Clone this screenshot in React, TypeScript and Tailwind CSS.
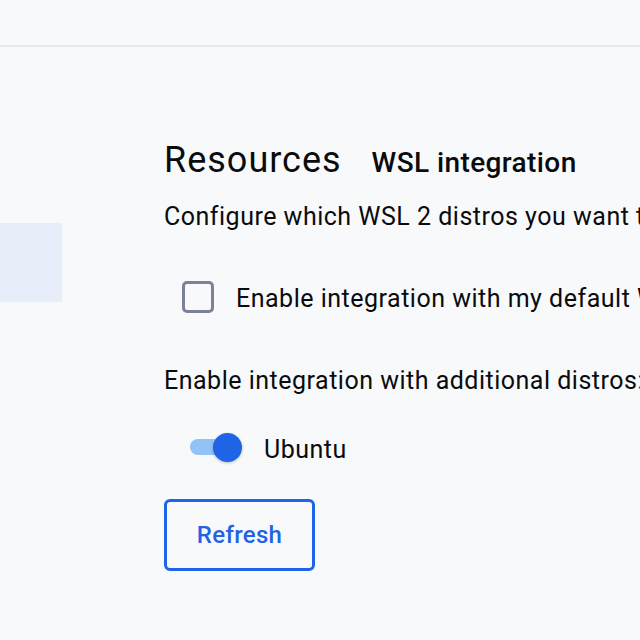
import { useState } from 'react'

export default function App() {
  const [defaultDistro, setDefaultDistro] = useState(false)
  const [ubuntu, setUbuntu] = useState(true)

  return (
    <div
      className="w-[640px] h-[640px] overflow-hidden bg-[#f8f9fb] text-[#0a0b0d]"
      style={{ fontFamily: 'Roboto, "Noto Sans", sans-serif' }}
    >
      <header className="h-[47px] border-b-2 border-[#e8e9ed]" />

      <div className="flex">
        {/* sidebar, mostly scrolled out of view */}
        <aside className="w-[62px] shrink-0 pt-[176px]">
          <div className="h-[79px] bg-[#e8eef9]" />
        </aside>

        <main className="flex-1 min-w-0 pl-[102px] pt-[92px] whitespace-nowrap">
          <div className="flex items-baseline gap-[30px] h-[42px]">
            <h1 className="text-[36px] leading-[42px] font-normal tracking-[1px]">Resources</h1>
            <h2 className="text-[28px] leading-[42px] font-medium tracking-[0.4px]">WSL integration</h2>
          </div>

          <p className="mt-[21px] text-[25px] leading-[30px] tracking-[0.5px]">
            Configure which WSL 2 distros you want to access Docker from.
          </p>

          <label className="mt-[49px] ml-[18px] flex items-center gap-[22px] h-[32px] cursor-pointer">
            <button
              onClick={() => setDefaultDistro(!defaultDistro)}
              className="w-[32px] h-[32px] rounded-[5px] border-[3px] border-[#7c8296] bg-transparent shrink-0"
              aria-label="Enable integration with my default WSL distro"
            />
            <span className="text-[25px] leading-[30px] tracking-[0.5px] mt-[4px]">
              Enable integration with my default WSL distro
            </span>
          </label>

          <p className="mt-[53px] text-[25px] leading-[30px] tracking-[0.5px]">
            Enable integration with additional distros:
          </p>

          <div className="mt-[36px] ml-[26px] flex items-center gap-[22px] h-[30px]">
            <button
              onClick={() => setUbuntu(!ubuntu)}
              className="relative w-[52px] h-[30px] shrink-0"
              aria-label="Ubuntu"
            >
              <span className="absolute left-0 top-[7px] w-[48px] h-[16px] rounded-full bg-[#91c3f6]" />
              <span
                className={
                  ubuntu
                    ? 'absolute left-[23px] top-[1px] w-[29px] h-[29px] rounded-full bg-[#1f63e6] shadow-[0_1px_3px_rgba(0,0,0,0.25)]'
                    : 'absolute left-0 top-[1px] w-[29px] h-[29px] rounded-full bg-white shadow-[0_1px_3px_rgba(0,0,0,0.25)]'
                }
              />
            </button>
            <span className="text-[25px] leading-[30px] tracking-[0.5px] mt-[5px]">Ubuntu</span>
          </div>

          <button className="mt-[37px] w-[151px] h-[72px] rounded-[6px] border-[3px] border-[#1f63e6] text-[#1f63e6] text-[24px] font-medium tracking-[0.3px]">
            Refresh
          </button>
        </main>
      </div>
    </div>
  )
}
